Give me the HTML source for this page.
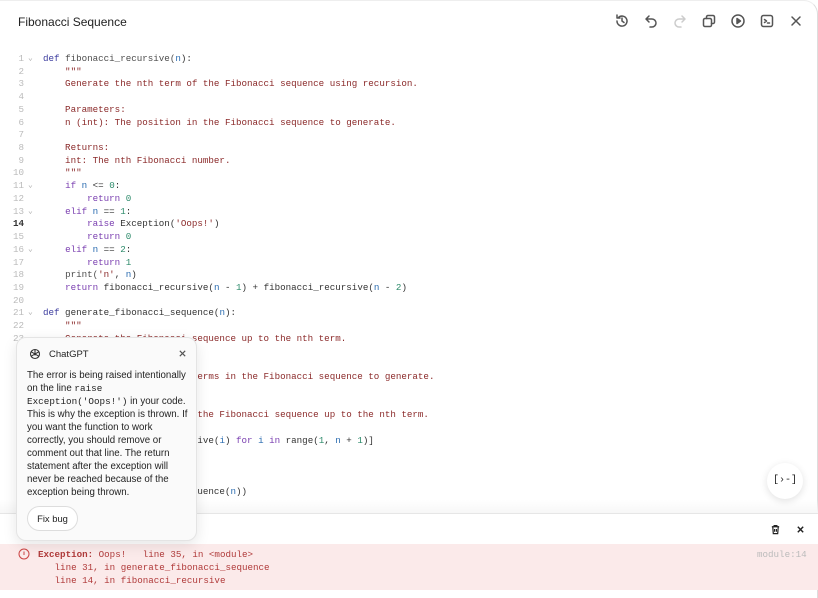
<!DOCTYPE html>
<html><head><style>
*{box-sizing:border-box;margin:0;padding:0}
body{width:818px;height:598px;background:#fff;font-family:"Liberation Sans",sans-serif;position:relative;overflow:hidden}
.frame{position:absolute;left:0;top:0;width:818px;height:598px;border-radius:0 14px 0 0;border-right:1px solid #ddd;border-top:1px solid #eee}
.title{position:absolute;left:18px;top:15px;font-size:12px;color:#222}
.icons{position:absolute;top:13px;left:614px;display:flex;gap:13px}
.icons svg{width:16px;height:16px;fill:none;stroke:#555;stroke-width:1.5;stroke-linecap:round;stroke-linejoin:round}
.code{position:absolute;left:0;top:53px;font-family:"Liberation Mono",monospace;font-size:9.2px;line-height:12.72px;white-space:pre}
.ln{position:absolute;left:0;width:24px;text-align:right;color:#bbb}
.fold{position:absolute;left:28px;color:#aaa;font-size:8px}
.tx{position:absolute;left:43px;color:#333}
.k{color:#7a3fb0}.kd{color:#3b3b9e}.s{color:#8b2a2a}.n{color:#2b6cb0}.num{color:#2c8a6a}.f{color:#4d4d4d}
.editbot{position:absolute;left:0;top:500px;width:818px;height:13px;background:linear-gradient(#fff0,#f7f7f7)}
.console{position:absolute;left:0;top:513px;width:818px;height:31px;border-top:1px solid #e6e6e6;background:#fff}
.err{position:absolute;left:0;top:544px;width:818px;height:46px;background:#fbeaea;font-family:"Liberation Mono",monospace;font-size:9.2px;line-height:13px;color:#b03a3a;white-space:pre}
.fab{position:absolute;left:767px;top:463px;width:36px;height:36px;border-radius:50%;background:#fff;box-shadow:0 2px 8px rgba(0,0,0,.12);font-size:10px;text-align:center;line-height:36px;color:#222;font-family:"Liberation Mono",monospace}
.pop{position:absolute;left:16px;top:337px;width:181px;height:204px;background:#fafafa;border:1px solid #e4e4e4;border-radius:10px;box-shadow:0 4px 14px rgba(0,0,0,.1);font-size:9.7px;line-height:13px;color:#222}
.pop .hd{position:absolute;left:32px;top:10px;font-size:9.5px}
.pop .bd{position:absolute;left:10px;top:31px;width:162px}
.pop code{font-family:"Liberation Mono",monospace;font-size:9.3px}
.btn{position:absolute;left:10px;top:168px;width:51px;height:25px;border:1px solid #ddd;border-radius:13px;background:#fff;font-size:9.4px;text-align:center;line-height:23px}
</style></head><body>
<div class="frame"></div>
<div class="title">Fibonacci Sequence</div>
<div class="icons">
<svg viewBox="0 0 16 16"><path d="M3 8a5 5 0 1 0 1.5-3.5M3 2v3h3M8 5v3l2 1.5"/></svg>
<svg viewBox="0 0 16 16"><path d="M6 3L3 6l3 3M3 6h6a4 4 0 0 1 0 8H7"/></svg>
<svg viewBox="0 0 16 16" style="stroke:#ccc"><path d="M10 3l3 3-3 3M13 6H7a4 4 0 0 0 0 8h2"/></svg>
<svg viewBox="0 0 16 16"><rect x="2.5" y="5.5" width="8" height="8" rx="1.5"/><path d="M5.5 5.5V4a1.5 1.5 0 0 1 1.5-1.5h5A1.5 1.5 0 0 1 13.5 4v5a1.5 1.5 0 0 1-1.5 1.5h-1.5"/></svg>
<svg viewBox="0 0 16 16"><circle cx="8" cy="8" r="6"/><path d="M7 5.5v5l3.5-2.5z" fill="#555"/></svg>
<svg viewBox="0 0 16 16"><rect x="2.5" y="2.5" width="11" height="11" rx="2"/><path d="M5.5 6.5l2 1.5-2 1.5M8.5 10h2"/></svg>
<svg viewBox="0 0 16 16"><path d="M4 4l8 8M12 4l-8 8"/></svg>
</div>
<div class="code">
<div class="ln" style="top:0">1</div><div class="fold" style="top:0">⌄</div><div class="tx" style="top:0"><span class="kd">def</span> <span class="f">fibonacci_recursive(</span><span class="n">n</span>):</div>
<div class="ln" style="top:12.72px">2</div><div class="tx s" style="top:12.72px">    """</div>
<div class="ln" style="top:25.44px">3</div><div class="tx s" style="top:25.44px">    Generate the nth term of the Fibonacci sequence using recursion.</div>
<div class="ln" style="top:38.16px">4</div>
<div class="ln" style="top:50.88px">5</div><div class="tx s" style="top:50.88px">    Parameters:</div>
<div class="ln" style="top:63.6px">6</div><div class="tx s" style="top:63.6px">    n (int): The position in the Fibonacci sequence to generate.</div>
<div class="ln" style="top:76.32px">7</div>
<div class="ln" style="top:89.04px">8</div><div class="tx s" style="top:89.04px">    Returns:</div>
<div class="ln" style="top:101.76px">9</div><div class="tx s" style="top:101.76px">    int: The nth Fibonacci number.</div>
<div class="ln" style="top:114.48px">10</div><div class="tx s" style="top:114.48px">    """</div>
<div class="ln" style="top:127.2px">11</div><div class="fold" style="top:127.2px">⌄</div><div class="tx" style="top:127.2px">    <span class="k">if</span> <span class="n">n</span> &lt;= <span class="num">0</span>:</div>
<div class="ln" style="top:139.92px">12</div><div class="tx" style="top:139.92px">        <span class="k">return</span> <span class="num">0</span></div>
<div class="ln" style="top:152.64px">13</div><div class="fold" style="top:152.64px">⌄</div><div class="tx" style="top:152.64px">    <span class="k">elif</span> <span class="n">n</span> == <span class="num">1</span>:</div>
<div class="ln" style="top:165.36px;color:#333;font-weight:bold">14</div><div class="tx" style="top:165.36px">        <span class="k">raise</span> Exception(<span class="s">'Oops!'</span>)</div>
<div class="ln" style="top:178.08px">15</div><div class="tx" style="top:178.08px">        <span class="k">return</span> <span class="num">0</span></div>
<div class="ln" style="top:190.8px">16</div><div class="fold" style="top:190.8px">⌄</div><div class="tx" style="top:190.8px">    <span class="k">elif</span> <span class="n">n</span> == <span class="num">2</span>:</div>
<div class="ln" style="top:203.52px">17</div><div class="tx" style="top:203.52px">        <span class="k">return</span> <span class="num">1</span></div>
<div class="ln" style="top:216.24px">18</div><div class="tx" style="top:216.24px">    <span class="f">print(</span><span class="s">'n'</span>, <span class="n">n</span>)</div>
<div class="ln" style="top:228.96px">19</div><div class="tx" style="top:228.96px">    <span class="k">return</span> fibonacci_recursive(<span class="n">n</span> - <span class="num">1</span>) + fibonacci_recursive(<span class="n">n</span> - <span class="num">2</span>)</div>
<div class="ln" style="top:241.68px">20</div>
<div class="ln" style="top:254.4px">21</div><div class="fold" style="top:254.4px">⌄</div><div class="tx" style="top:254.4px"><span class="kd">def</span> generate_fibonacci_sequence(<span class="n">n</span>):</div>
<div class="ln" style="top:267.12px">22</div><div class="tx s" style="top:267.12px">    """</div>
<div class="ln" style="top:279.84px">23</div><div class="tx s" style="top:279.84px">    Generate the Fibonacci sequence up to the nth term.</div>
<div class="tx s" style="top:318px">    n (int): The number of terms in the Fibonacci sequence to generate.</div>
<div class="tx s" style="top:356.2px">    list: A list containing the Fibonacci sequence up to the nth term.</div>
<div class="tx" style="top:381.6px">    <span class="k">return</span> [fibonacci_recursive(<span class="n">i</span>) <span class="k">for</span> <span class="n">i</span> <span class="k">in</span> range(<span class="num">1</span>, <span class="n">n</span> + <span class="num">1</span>)]</div>
<div class="tx" style="top:432.5px">print(generate_fibonacci_sequence(<span class="n">n</span>))</div>
</div>
<div class="editbot"></div>
<div class="fab">[›-]</div>
<div class="console">
<svg style="position:absolute;left:770px;top:10px" width="11" height="11" viewBox="0 0 12 12" fill="none" stroke="#222" stroke-width="1.3"><path d="M2 3h8M4.5 3V1.8h3V3M3 3l.6 7.5h4.8L9 3M5 5.5v3M7 5.5v3"/></svg>
<svg style="position:absolute;left:796px;top:11px" width="9" height="9" viewBox="0 0 10 10" stroke="#222" stroke-width="1.6"><path d="M2 2l6 6M8 2l-6 6"/></svg>
</div>
<div class="err"><svg style="position:absolute;left:18px;top:4px" width="12" height="12" viewBox="0 0 12 12" fill="none" stroke="#c44" stroke-width="1"><circle cx="6" cy="6" r="5"/><path d="M6 3.5v3.5"/></svg><div style="position:absolute;left:38px;top:4px"><b>Exception:</b> Oops!   line 35, in &lt;module&gt;
   line 31, in generate_fibonacci_sequence
   line 14, in fibonacci_recursive</div><div style="position:absolute;left:757px;top:4px;color:#bbb">module:14</div></div>
<div class="pop">
<svg style="position:absolute;left:12px;top:10px" width="12" height="12" viewBox="0 0 12 12" fill="none" stroke="#333" stroke-width="1.1"><circle cx="6" cy="6" r="4.5"/><path d="M6 1.5v6M2.2 3.8l5.2 3M2.2 8.2l5.2-3M9.8 3.8l-5.2 3M9.8 8.2l-5.2-3"/></svg>
<div class="hd">ChatGPT</div>
<svg style="position:absolute;left:161px;top:11px" width="9" height="9" viewBox="0 0 10 10" stroke="#555" stroke-width="1.3"><path d="M2 2l6 6M8 2l-6 6"/></svg>
<div class="bd">The error is being raised intentionally<br>on the line <code>raise</code><br><code>Exception('Oops!')</code> in your code.<br>This is why the exception is thrown. If<br>you want the function to work<br>correctly, you should remove or<br>comment out that line. The return<br>statement after the exception will<br>never be reached because of the<br>exception being thrown.</div>
<div class="btn">Fix bug</div>
</div>
</body></html>
